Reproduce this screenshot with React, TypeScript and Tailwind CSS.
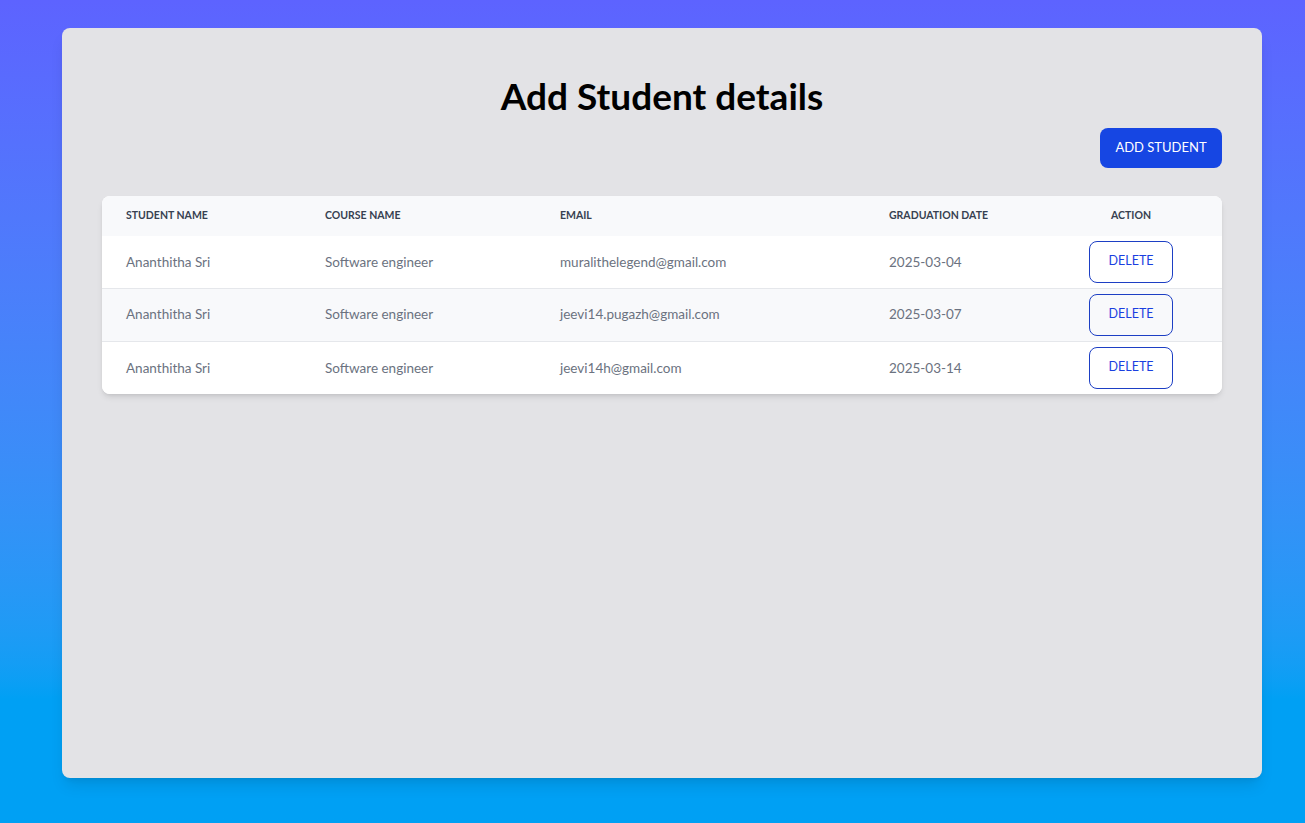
const students = [
  { name: "Ananthitha Sri", course: "Software engineer", email: "muralithelegend@gmail.com", date: "2025-03-04" },
  { name: "Ananthitha Sri", course: "Software engineer", email: "jeevi14.pugazh@gmail.com", date: "2025-03-07" },
  { name: "Ananthitha Sri", course: "Software engineer", email: "jeevi14h@gmail.com", date: "2025-03-14" },
];

export default function App() {
  return (
    <div className="min-h-[823px] w-full bg-gradient-to-b from-[#5d63ff] to-[#00a0f4] to-85% pl-[62px] pt-[28px] pb-[45px] font-['Lato',sans-serif]">
      <div className="h-[750px] w-[1200px] rounded-lg bg-[#e3e3e6] px-10 pt-[44px] shadow-lg">
        <h1 className="text-center text-[37px] font-bold leading-[48px] text-black">Add Student details</h1>

        <div className="mt-[8px] flex justify-end">
          <button className="h-10 w-[122px] rounded-lg bg-[#1646e3] text-[13px] text-white">ADD STUDENT</button>
        </div>

        <div className="mt-7 overflow-hidden rounded-lg bg-white shadow-md">
          <table className="w-full table-fixed border-collapse text-left">
            <colgroup>
              <col className="w-[199px]" />
              <col className="w-[235px]" />
              <col className="w-[329px]" />
              <col className="w-[175px]" />
              <col />
            </colgroup>
            <thead className="bg-[#f8f9fb]">
              <tr className="h-10 text-[10.5px] font-bold uppercase text-[#374151]">
                <th className="pl-6">Student Name</th>
                <th className="pl-6">Course Name</th>
                <th className="pl-6">Email</th>
                <th className="pl-6">Graduation Date</th>
                <th className="text-center">Action</th>
              </tr>
            </thead>
            <tbody>
              {students.map((s, i) => (
                <tr
                  key={i}
                  className={`text-[13.5px] text-[#6b7280] ${i % 2 === 1 ? "bg-[#f8f9fb]" : "bg-white"} ${i > 0 ? "h-[53px] border-t border-[#e5e7eb]" : "h-[52px]"}`}
                >
                  <td className="pl-6">{s.name}</td>
                  <td className="pl-6">{s.course}</td>
                  <td className="pl-6">{s.email}</td>
                  <td className="pl-6">{s.date}</td>
                  <td className="text-center">
                    <button className="h-[42px] w-[84px] rounded-lg border border-[#1d3fc4] text-[12.5px] text-[#1a3fe0]">
                      DELETE
                    </button>
                  </td>
                </tr>
              ))}
            </tbody>
          </table>
        </div>
      </div>
    </div>
  );
}
